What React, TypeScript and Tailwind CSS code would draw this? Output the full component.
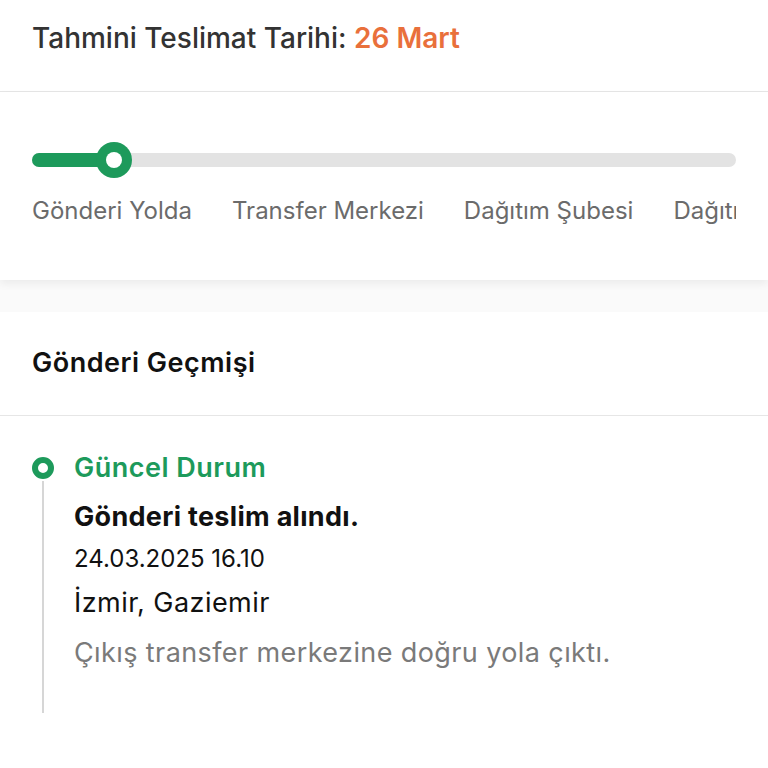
import React from "react";

const steps = ["Gönderi Yolda", "Transfer Merkezi", "Dağıtım Şubesi", "Dağıtımda"];

const App = () => {
  return (
    <div
      className="w-[768px] h-[768px] bg-white overflow-hidden"
      style={{ fontFamily: "Inter, 'Noto Sans', sans-serif" }}
    >
      <div className="h-[92px] border-b border-[#e6e6e6] px-8 pt-[20px]">
        <p className="text-[28px] font-medium text-[#333333] leading-[36px]">
          Tahmini Teslimat Tarihi: <span className="text-[#e9703b] font-semibold">26 Mart</span>
        </p>
      </div>

      <div className="relative z-10 h-[188px] bg-white shadow-[0_4px_8px_rgba(0,0,0,0.06)] px-8 pt-[50px]">
        <div className="relative h-[36px] flex items-center">
          <div className="w-full h-[14px] rounded-full bg-[#e3e3e3]" />
          <div className="absolute left-0 top-[11px] h-[14px] w-[90px] rounded-full bg-[#1d9a5b]" />
          <div className="absolute left-[64px] top-0 w-[36px] h-[36px] rounded-full bg-[#1d9a5b] flex items-center justify-center">
            <div className="w-[16px] h-[16px] rounded-full bg-white" />
          </div>
        </div>
        {/* the last label runs past the card edge and is clipped, as in the app */}
        <div className="mt-[18px] flex gap-[40px] overflow-hidden whitespace-nowrap">
          {steps.map((s) => (
            <span key={s} className="text-[24px] text-[#6b6b6b] leading-[30px]">
              {s}
            </span>
          ))}
        </div>
      </div>

      <div className="h-[32px] bg-[#fafafa]" />

      <div className="h-[104px] border-b border-[#e6e6e6] px-8 flex items-center">
        <h2 className="text-[27px] font-semibold text-[#111111] tracking-[0.5px]">Gönderi Geçmişi</h2>
      </div>

      <div className="px-8 pt-[36px] flex gap-[20px]">
        <div className="flex flex-col items-center w-[22px] pt-[5px]">
          <div className="w-[22px] h-[22px] rounded-full border-[6px] border-[#1d9a5b] bg-white" />
          <div className="w-[2px] h-[232px] bg-[#d6d6d6] mt-[2px]" />
        </div>
        <div className="flex flex-col">
          <p className="text-[27px] font-semibold text-[#1d9a5b] leading-[32px] tracking-[0.5px]">
            Güncel Durum
          </p>
          <p className="mt-[17px] text-[27px] font-bold text-[#111111] leading-[32px] tracking-[0.3px]">
            Gönderi teslim alındı.
          </p>
          <p className="mt-[10px] text-[24px] text-[#111111] leading-[32px]">24.03.2025 16.10</p>
          <p className="mt-[12px] text-[27px] text-[#111111] leading-[32px] tracking-[0.45px]">
            İzmir, Gaziemir
          </p>
          <p className="mt-[18px] text-[27px] text-[#7a7a7a] leading-[32px] tracking-[0.4px]">
            Çıkış transfer merkezine doğru yola çıktı.
          </p>
        </div>
      </div>
    </div>
  );
};

export default App;
